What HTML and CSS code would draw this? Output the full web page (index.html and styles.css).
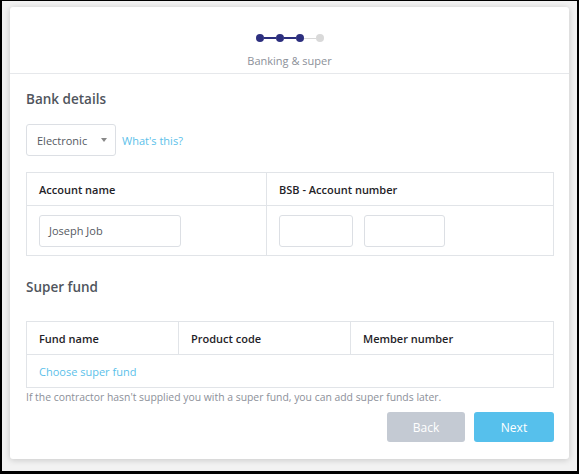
FILE: index.html
```html
<!DOCTYPE html>
<html lang="en">
<head>
    <meta charset="UTF-8">
    <meta name="viewport" content="width=device-width, initial-scale=1.0">
    <title>Banking &amp; super</title>
    <link rel="stylesheet" href="styles.css">
</head>
<body>
    <div class="screen">
        <div class="card">
            <div class="card-header">
                <div class="stepper">
                    <span class="dot done"></span>
                    <span class="line done"></span>
                    <span class="dot done"></span>
                    <span class="line done"></span>
                    <span class="dot done"></span>
                    <span class="line"></span>
                    <span class="dot"></span>
                </div>
                <div class="step-label">Banking &amp; super</div>
            </div>

            <div class="card-body">
                <h2 class="section-title">Bank details</h2>
                <div class="method-row">
                    <div class="select">
                        <span>Electronic</span>
                        <span class="caret"></span>
                    </div>
                    <a class="link" href="#">What's this?</a>
                </div>

                <table class="grid bank">
                    <tr>
                        <th class="col-name">Account name</th>
                        <th>BSB - Account number</th>
                    </tr>
                    <tr class="input-row">
                        <td><div class="input name">Joseph Job</div></td>
                        <td>
                            <div class="bsb">
                                <div class="input bsb-code"></div>
                                <div class="input bsb-number"></div>
                            </div>
                        </td>
                    </tr>
                </table>

                <h2 class="section-title super">Super fund</h2>
                <table class="grid fund">
                    <tr>
                        <th class="col-fund">Fund name</th>
                        <th class="col-code">Product code</th>
                        <th>Member number</th>
                    </tr>
                    <tr>
                        <td colspan="3"><a class="link" href="#">Choose super fund</a></td>
                    </tr>
                </table>
                <p class="hint">If the contractor hasn't supplied you with a super fund, you can add super funds later.</p>

                <div class="actions">
                    <button class="btn back">Back</button>
                    <button class="btn next">Next</button>
                </div>
            </div>
        </div>
    </div>
</body>
</html>
```

FILE: styles.css
```css
html, body {
    margin: 0;
    background-color: #000;
}
body {
    font-family: 'Open Sans', 'Liberation Sans', sans-serif;
    font-size: 11px;
    color: #4a4f57;
}
.screen {
    width: 575px;
    height: 470px;
    border-style: solid;
    border-color: #000;
    border-width: 1px 2px 3px 2px;
    background-color: #f2f2f2;
    overflow: hidden;
}
.card {
    margin: 6px 0 0 8px;
    width: 559px;
    height: 452px;
    background-color: #fff;
    border-radius: 3px;
    box-shadow: 0 1px 6px rgba(0, 0, 0, 0.18);
}
.card-header {
    padding: 27px 0 5px;
    border-bottom: 1px solid #e6e8eb;
    text-align: center;
}
.stepper {
    display: flex;
    justify-content: center;
    align-items: center;
    height: 8px;
}
.dot {
    width: 8px;
    height: 8px;
    border-radius: 50%;
    background-color: #d9d9d9;
}
.dot.done {
    background-color: #2d2f7f;
}
.line {
    width: 12px;
    height: 1px;
    background-color: #d9d9d9;
}
.line.done {
    height: 2px;
    background-color: #2d2f7f;
}
.step-label {
    margin-top: 12px;
    line-height: 14px;
    color: #8c9099;
}
.card-body {
    padding: 16px 15px 0 16px;
}
.section-title {
    margin: 0;
    font-size: 13.5px;
    font-weight: 600;
    line-height: 18px;
    color: #50555d;
}
.section-title.super {
    margin-top: 22px;
}
.method-row {
    display: flex;
    align-items: center;
    margin-top: 16px;
}
.select {
    display: flex;
    align-items: center;
    justify-content: space-between;
    box-sizing: border-box;
    width: 90px;
    height: 32px;
    padding: 0 8px 0 10px;
    border: 1px solid #dcdfe4;
    border-radius: 3px;
    color: #555a62;
}
.caret {
    width: 0;
    height: 0;
    border-left: 3px solid transparent;
    border-right: 3px solid transparent;
    border-top: 4px solid #888;
}
.link {
    color: #5bbfea;
    text-decoration: none;
}
.method-row .link {
    margin-left: 6px;
}
.grid {
    width: 528px;
    margin-top: 16px;
    border-collapse: collapse;
    table-layout: fixed;
}
.grid th,
.grid td {
    border: 1px solid #e1e4e8;
    text-align: left;
    padding: 0 12px;
}
.grid th {
    height: 32px;
    font-weight: 600;
    color: #1f2328;
}
.grid td {
    height: 32px;
}
.col-name {
    width: 215px;
}
.col-fund {
    width: 127px;
}
.col-code {
    width: 147px;
}
.input-row td {
    height: 49px;
}
.input {
    box-sizing: border-box;
    height: 32px;
    border: 1px solid #dcdfe4;
    border-radius: 3px;
    line-height: 30px;
    padding: 0 9px;
    color: #555a62;
}
.input.name {
    width: 142px;
}
.bsb {
    display: flex;
    gap: 11px;
}
.bsb-code {
    width: 74px;
}
.bsb-number {
    width: 81px;
}
.super + .grid {
    margin-top: 25px;
}
.hint {
    margin: 2px 0 0;
    font-size: 10.4px;
    line-height: 14px;
    color: #8c9099;
}
.actions {
    display: flex;
    justify-content: flex-end;
    gap: 9px;
    margin-top: 8px;
}
.btn {
    height: 30px;
    border: none;
    border-radius: 3px;
    font-family: inherit;
    font-size: 12px;
    color: #fff;
}
.btn.back {
    width: 78px;
    background-color: #c4cad3;
}
.btn.next {
    width: 80px;
    background-color: #56c0ec;
}
```
